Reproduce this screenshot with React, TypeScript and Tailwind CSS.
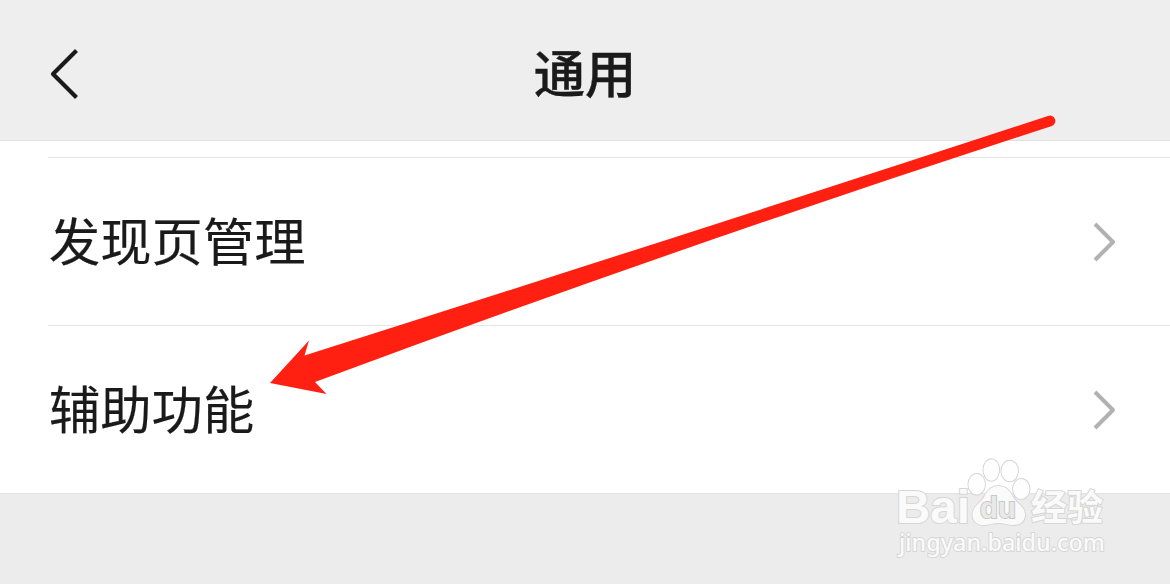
import { ReactNode } from 'react'

const PAW_BODY =
  'M998.500 486 C1006 486 1010 491 1013 497 C1016 503 1025 506 1025 515 C1025 522 1019 525.500 1012 525 C1006 524.500 1003 523 998.500 523 C994 523 991 524.500 985 525 C978 525.500 972.500 522 972.500 515 C972.500 506 981 503 984 497 C987 491 991 486 998.500 486 Z'

const ChevronLeft = () => (
  <svg width="32" height="56" viewBox="0 0 32 56" fill="none">
    <path
      d="M28.500 4.500 5 28 28.500 51.500"
      stroke="#1a1a1a"
      strokeWidth="4.200"
      strokeLinejoin="round"
    />
  </svg>
)

const ChevronRight = () => (
  <svg width="26" height="42" viewBox="0 0 26 42" fill="none">
    <path
      d="M3 3 21 21 3 39"
      stroke="#b2b2b2"
      strokeWidth="4"
      strokeLinejoin="round"
    />
  </svg>
)

const SettingsRow = ({ children }: { children: ReactNode }) => (
  <div className="ml-12 flex h-[168px] items-center justify-between border-t border-[#e4e4e4] pr-[52px]">
    <span className="pb-1.5 pl-px text-[51.3px] leading-[72px] text-[#1a1a1a] [-webkit-text-stroke:0.15px_#1a1a1a]">
      {children}
    </span>
    <ChevronRight />
  </div>
)

const Arrow = () => (
  <svg
    className="absolute inset-0"
    width="1170"
    height="584"
    viewBox="0 0 1170 584"
  >
    <path
      d="M270 383 309 340.500 304.500 355.500 Q720 223.500 1048 116 A5 5 0 0 1 1052 126 Q684 245 315 382 L326.500 394 Z"
      fill="#ff2012"
    />
  </svg>
)

const Watermark = () => (
  <svg
    className="absolute inset-0"
    width="1170"
    height="584"
    viewBox="0 0 1170 584"
    fill="#fafafa"
    stroke="#d6d6d6"
    strokeWidth="2"
    style={{ paintOrder: 'stroke' }}
  >
    <g fill="#fefefe">
      <ellipse cx="991.300" cy="470" rx="7.800" ry="10.800" />
      <ellipse cx="1009.700" cy="471" rx="8.300" ry="10.300" />
      <ellipse cx="976.700" cy="484.300" rx="8.300" ry="10.300" />
      <ellipse cx="1021.300" cy="489" rx="8.200" ry="10" />
    </g>
    <path d={PAW_BODY} />
    <g fontFamily='"Liberation Sans", sans-serif' fontWeight="700">
      <text
        x="896"
        y="523"
        fontSize="46"
        textLength="74"
        lengthAdjust="spacingAndGlyphs"
      >
        Bai
      </text>
      <text
        x="980"
        y="518"
        fontSize="29"
        fill="#e9e9e9"
        stroke="#c8c8c8"
        textLength="36"
        lengthAdjust="spacingAndGlyphs"
      >
        du
      </text>
    </g>
    <text
      x="1031"
      y="521"
      fontSize="36"
      fontWeight="700"
      fontFamily='"Noto Sans CJK SC", sans-serif'
      textLength="72"
      lengthAdjust="spacingAndGlyphs"
    >
      经验
    </text>
    <text
      x="899"
      y="551"
      fontSize="24"
      fontWeight="500"
      fontFamily='"Noto Sans", sans-serif'
      textLength="206"
      lengthAdjust="spacingAndGlyphs"
    >
      jingyan.baidu.com
    </text>
  </svg>
)

export default function App() {
  return (
    <div className="relative h-[584px] w-[1170px] overflow-hidden bg-[#ececec] font-['Noto_Sans_CJK_SC',sans-serif]">
      <header className="grid h-[141px] grid-cols-3 items-center border-b border-[#e0e0e0] bg-[#eeeeee] pt-2">
        <div className="pl-12">
          <ChevronLeft />
        </div>
        <h1 className="pb-[7px] text-center text-[51.3px] leading-[72px] font-medium text-[#1a1a1a] [-webkit-text-stroke:0.4px_#1a1a1a]">
          通用
        </h1>
      </header>
      <main className="border-b border-[#e2e2e2] bg-white pt-4">
        <SettingsRow>发现页管理</SettingsRow>
        <SettingsRow>辅助功能</SettingsRow>
      </main>
      <Arrow />
      <Watermark />
    </div>
  )
}
